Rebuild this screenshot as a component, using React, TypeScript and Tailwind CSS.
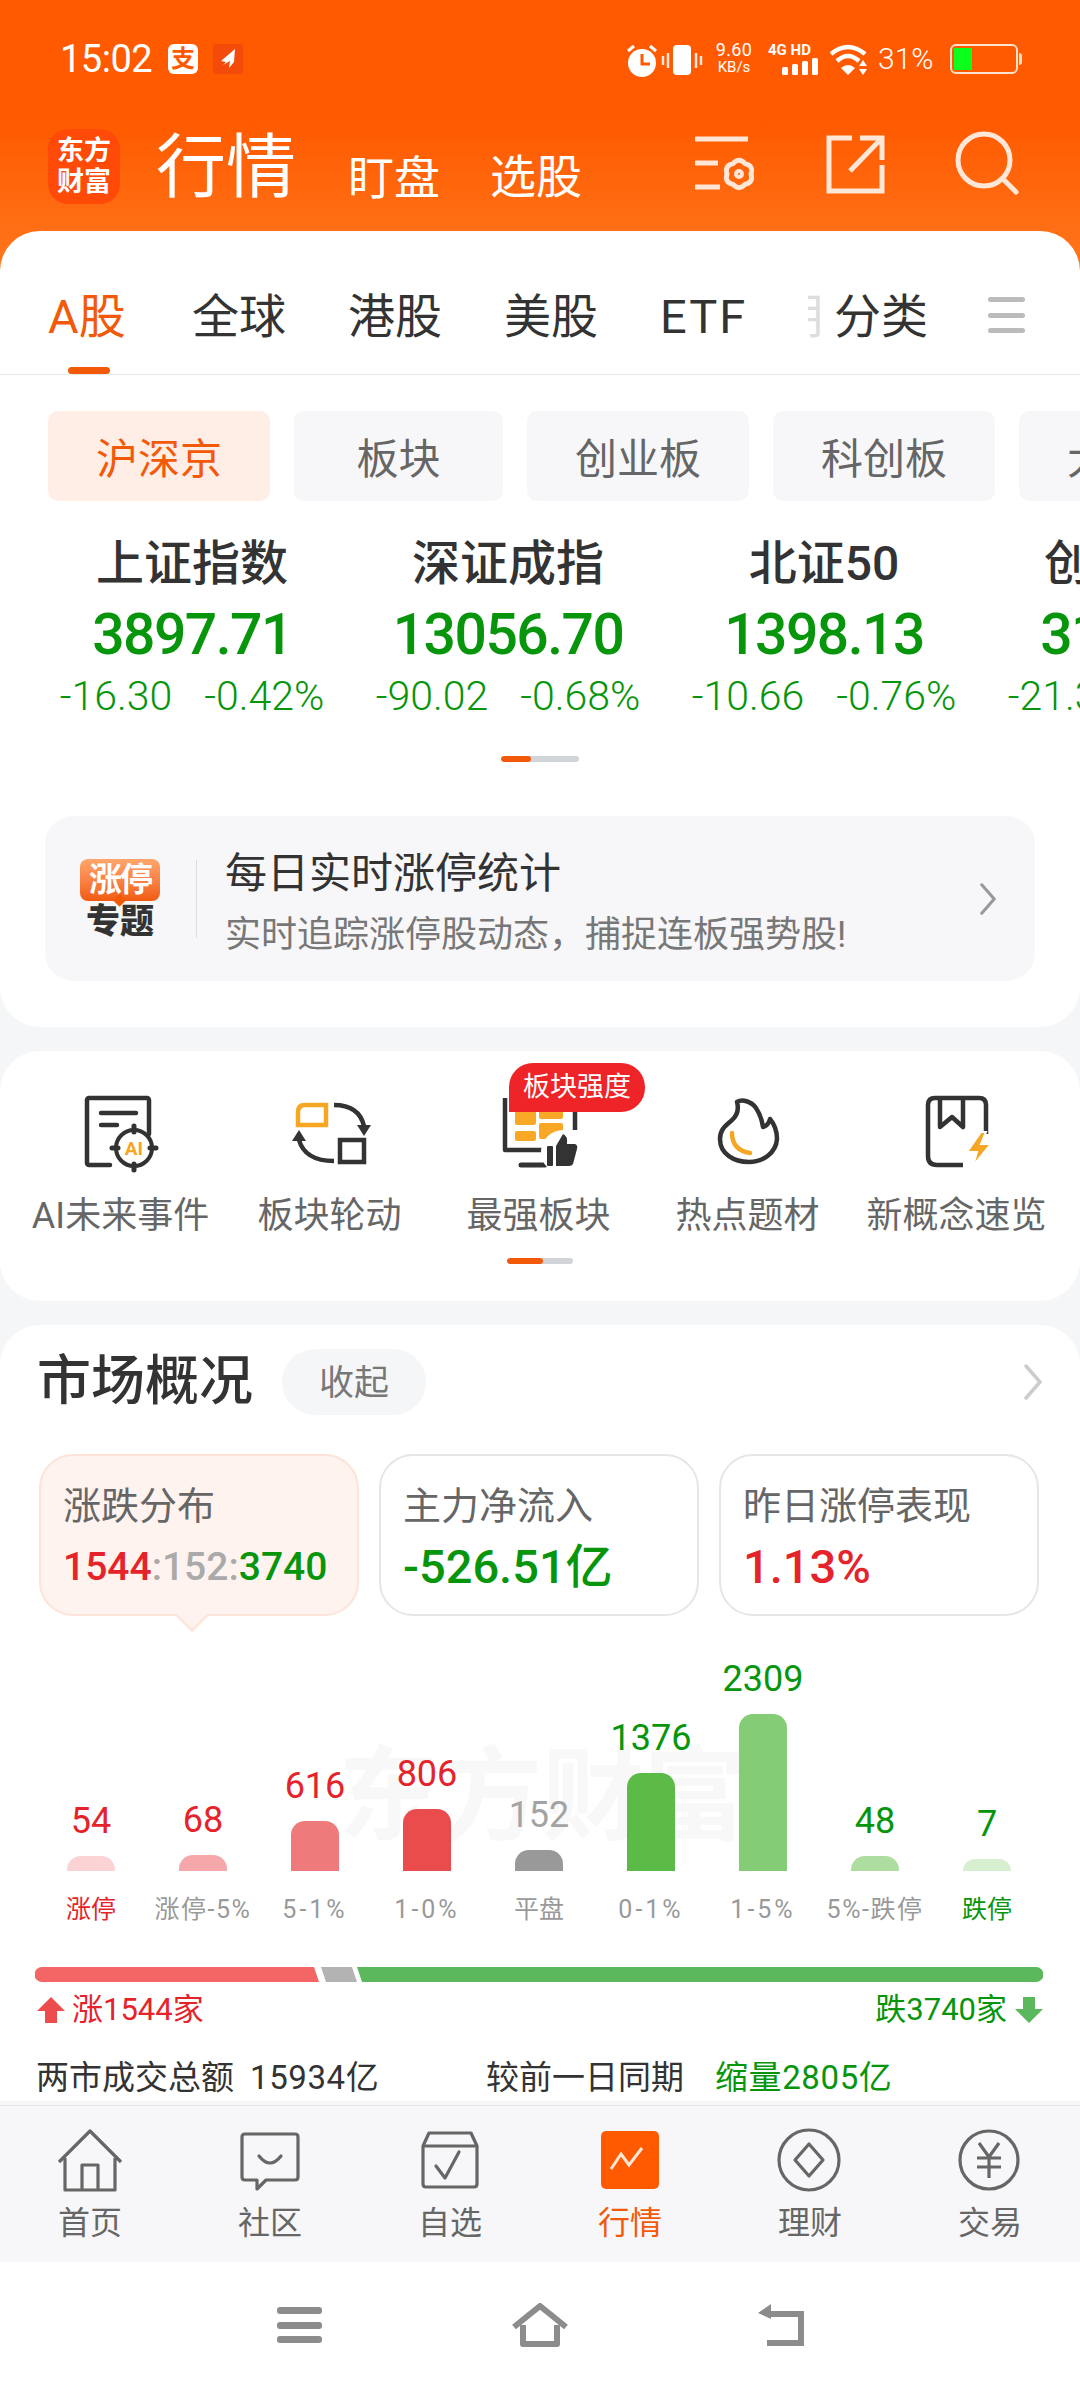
const topTabs = ['全球', '港股', '美股'];

const chips = [
  { label: '沪深京', width: 'w-[222px]', active: true },
  { label: '板块', width: 'w-[209px]', active: false },
  { label: '创业板', width: 'w-[222px]', active: false },
  { label: '科创板', width: 'w-[222px]', active: false },
  { label: '大盘', width: 'w-[180px]', active: false },
];

const indices = [
  { name: '上证指数', price: '3897.71', change: '-16.30', percent: '-0.42%' },
  { name: '深证成指', price: '13056.70', change: '-90.02', percent: '-0.68%' },
  { name: '北证50', price: '1398.13', change: '-10.66', percent: '-0.76%' },
  { name: '创业板指', price: '3150.43', change: '-21.35', percent: '-0.67%' },
];

const bars = [
  { value: '54', label: '涨停', height: 15, bar: 'bg-[#fbd3d4]', text: 'text-[#e5232a]', labelClass: 'text-[#e5232a]' },
  { value: '68', label: '涨停-5%', height: 16, bar: 'bg-[#f6a7a9]', text: 'text-[#e5232a]', labelClass: 'text-[#999999] tracking-[1.5px]' },
  { value: '616', label: '5-1%', height: 50, bar: 'bg-[#ef7a7c]', text: 'text-[#e5232a]', labelClass: 'text-[#999999] tracking-[3px]' },
  { value: '806', label: '1-0%', height: 62, bar: 'bg-[#ea4b4d]', text: 'text-[#e5232a]', labelClass: 'text-[#999999] tracking-[3px]' },
  { value: '152', label: '平盘', height: 21, bar: 'bg-[#999999]', text: 'text-[#a3a3a3]', labelClass: 'text-[#999999]' },
  { value: '1376', label: '0-1%', height: 98, bar: 'bg-[#5bbb46]', text: 'text-[#07950c]', labelClass: 'text-[#999999] tracking-[3px]' },
  { value: '2309', label: '1-5%', height: 157, bar: 'bg-[#85cc76]', text: 'text-[#07950c]', labelClass: 'text-[#999999] tracking-[3px]' },
  { value: '48', label: '5%-跌停', height: 15, bar: 'bg-[#addd9f]', text: 'text-[#07950c]', labelClass: 'text-[#999999] tracking-[1.5px]' },
  { value: '7', label: '跌停', height: 12, bar: 'bg-[#d6efce]', text: 'text-[#07950c]', labelClass: 'text-[#07950c]' },
];

const Chevron = ({ color, className }: { color: string; className: string }) => (
  <svg viewBox="0 0 20 36" className={className} fill="none" stroke={color} strokeWidth="3.5" strokeLinecap="round" strokeLinejoin="round">
    <path d="M3 2 L17 18 L3 34" />
  </svg>
);

const AlarmVibrate = () => (
  <svg width="76" height="34" viewBox="0 0 76 34" className="shrink-0">
    <circle cx="15" cy="19" r="14" fill="#fff" />
    <path d="M15 10v10h8" stroke="#ff5a00" strokeWidth="3" fill="none" />
    <path d="M1 7l6-5M29 7l-6-5" stroke="#fff" strokeWidth="3" />
    <rect x="46" y="1" width="18" height="30" rx="4" fill="#fff" />
    <path d="M41 9v15M69 9v15" stroke="#fff" strokeWidth="2.500" opacity="0.85" />
    <path d="M36 12v9M74 12v9" stroke="#fff" strokeWidth="2.500" opacity="0.85" />
  </svg>
);

const SignalBars = () => (
  <svg width="36" height="17" viewBox="0 0 36 17" className="ml-auto">
    <rect x="0" y="9" width="6" height="8" rx="1.500" fill="#fff" />
    <rect x="10" y="6" width="6" height="11" rx="1.500" fill="#fff" />
    <rect x="20" y="3" width="6" height="14" rx="1.500" fill="#fff" />
    <rect x="30" y="0" width="6" height="17" rx="1.500" fill="#fff" />
  </svg>
);

const WifiIcon = () => (
  <svg width="38" height="32" viewBox="0 0 38 32" className="shrink-0">
    <path d="M1 10Q18 -4 35 10" stroke="#fff" strokeWidth="4.500" fill="none" />
    <path d="M7 17Q18 7 29 17" stroke="#fff" strokeWidth="4.500" fill="none" />
    <path d="M11 24Q18 18 25 24L18 31Z" fill="#fff" />
    <path d="M29 22h8l-4-6zM29 25h8l-4 6z" fill="#fff" />
  </svg>
);

const Battery = () => (
  <div className="flex items-center">
    <div className="w-[68px] h-[30px] rounded-[6px] border-2 border-[#ffe1cc] p-[2px]">
      <div className="w-[18px] h-full bg-[#0cff1c]" />
    </div>
    <div className="w-[3px] h-[12px] ml-[1px] bg-[#ffe1cc] rounded-r-sm" />
  </div>
);

const StatusBar = () => (
  <div className="h-[118px] pt-[41px] pl-[60px] flex items-start text-white">
    <span className="w-[92px] text-[38px] leading-[36px] tracking-[-0.5px]">15:02</span>
    <div className="ml-[16px] w-[30px] h-[30px] mt-[3px] bg-white rounded-[6px] flex items-center justify-center text-[#ff5a00] text-[24px] leading-none font-bold">支</div>
    <div className="ml-[15px] w-[30px] h-[30px] mt-[3px] bg-[#f44a0a] rounded-[3px] flex items-center justify-center">
      <svg width="20" height="22" viewBox="0 0 20 22" fill="#fff">
        <path d="M17 1 L3 13 L8 14 L5 17 L12 13 L11 20 L16 14 Z" />
      </svg>
    </div>
    <div className="ml-[384px] mt-[3px]">
      <AlarmVibrate />
    </div>
    <div className="ml-[11px] w-[40px] flex flex-col items-center">
      <span className="text-[18px] leading-[18px] tracking-[0.3px]">9.60</span>
      <span className="text-[15px] leading-[17px]">KB/s</span>
    </div>
    <div className="ml-[14px] mt-[1px] w-[50px] flex flex-col">
      <span className="text-[15px] leading-[16px] font-bold whitespace-nowrap">4G HD</span>
      <SignalBars />
    </div>
    <div className="ml-[12px] mt-[3px]">
      <WifiIcon />
    </div>
    <span className="ml-[10px] w-[60px] text-[30px] leading-[36px] font-light">31%</span>
    <div className="ml-[12px] mt-[3px]">
      <Battery />
    </div>
  </div>
);

const HeaderIcons = () => (
  <div className="ml-auto mr-[60px] mt-[17px] flex items-start">
    <svg width="64" height="58" viewBox="0 0 64 58" fill="none" stroke="#ffe7d8" strokeWidth="5">
      <path d="M1 4H54M1 28H24M1 52H26" />
      <path d="M57 39Q59.700 30.500 51 28.600Q45 22 39 28.600Q30.300 30.500 33 39Q30.300 47.500 39 49.400Q45 56 51 49.400Q59.700 47.500 57 39Z" strokeLinejoin="round" />
      <circle cx="45" cy="39" r="3" strokeWidth="4" />
    </svg>
    <svg width="60" height="60" viewBox="0 0 60 60" fill="none" stroke="#ffe7d8" strokeWidth="5" className="ml-[68px]">
      <path d="M26 3H3V56H56V30" />
      <path d="M24 36L54 5M34 3H56V25" />
    </svg>
    <svg width="66" height="66" viewBox="0 0 66 66" fill="none" stroke="#ffe7d8" strokeWidth="5" strokeLinecap="round" className="ml-[68px] -mt-[5px]">
      <circle cx="30" cy="30" r="26" />
      <path d="M50 50L62 62" />
    </svg>
  </div>
);

const TitleRow = () => (
  <div className="h-[113px] pl-[48px] flex items-start text-white">
    <div className="w-[72px] h-[75px] mt-[11px] rounded-[20px] bg-[#ff4a08] flex flex-col items-center justify-center text-[27px] leading-[31px] font-bold">
      <span>东方</span>
      <span>财富</span>
    </div>
    <span className="ml-[36px] mt-[5px] text-[70px] leading-[90px]">行情</span>
    <span className="ml-[52px] mt-[28px] text-[46px] leading-[64px]">盯盘</span>
    <span className="ml-[50px] mt-[27px] text-[46px] leading-[64px]">选股</span>
    <HeaderIcons />
  </div>
);

const MarketTabs = () => (
  <div className="h-[144px] pl-[48px] pt-[56px] flex items-start border-b border-[#e8e8e8] text-[47px] leading-[60px] text-[#333333]">
    <div className="w-[80px] flex flex-col text-[#f25a0a] whitespace-nowrap">
      <span>A股</span>
      <span className="w-[42px] h-[7px] mt-[20px] ml-[20px] rounded-full bg-[#f25a0a]" />
    </div>
    <div className="flex gap-[64px] ml-[64px]">
      {topTabs.map((tab) => (
        <span key={tab} className="w-[92px] whitespace-nowrap">{tab}</span>
      ))}
      <span className="w-[86px] tracking-[2px]">ETF</span>
    </div>
    <div className="ml-[62px] w-[14px] overflow-hidden text-[#dddddd]">
      <span className="block -ml-[32px] w-[60px]">期</span>
    </div>
    <span className="ml-[12px] whitespace-nowrap">分类</span>
    <div className="ml-[60px] mt-[10px] w-[37px] h-[36px] flex flex-col justify-between">
      <span className="h-[5px] rounded-full bg-[#bbbbbb]" />
      <span className="h-[5px] rounded-full bg-[#bbbbbb]" />
      <span className="h-[5px] rounded-full bg-[#bbbbbb]" />
    </div>
  </div>
);

const ChipRow = () => (
  <div className="mt-[36px] pl-[48px] flex gap-[24px] overflow-hidden">
    {chips.map((chip) => (
      <div
        key={chip.label}
        className={
          chip.active
            ? `${chip.width} shrink-0 h-[90px] pt-[7px] rounded-[10px] bg-[#ffeee6] text-[#f25a0a] text-[42px] flex items-center justify-center`
            : `${chip.width} shrink-0 h-[90px] pt-[7px] rounded-[10px] bg-[#f7f7f9] text-[#666666] text-[42px] flex items-center justify-center`
        }
      >
        {chip.label}
      </div>
    ))}
  </div>
);

const IndexRow = () => (
  <div className="mt-[33px] pl-[34px] flex overflow-hidden">
    {indices.map((item) => (
      <div key={item.name} className="w-[316px] shrink-0 flex flex-col items-center">
        <span className="h-[60px] text-[48px] leading-[60px] font-medium text-[#333333]">{item.name}</span>
        <span className="h-[80px] text-[57px] leading-[82px] tracking-[-1.5px] font-medium text-[#07950c]">{item.price}</span>
        <div className="h-[44px] flex gap-[32px] text-[41px] leading-[44px] font-light text-[#07950c] whitespace-nowrap">
          <span>{item.change}</span>
          <span>{item.percent}</span>
        </div>
      </div>
    ))}
  </div>
);

const Pager = ({ track, fill, className }: { track: string; fill: string; className: string }) => (
  <div className={`${track} h-[6px] rounded-full bg-[#d1d4d9] overflow-hidden ${className}`}>
    <div className={`${fill} h-full rounded-full bg-[#f25a0a]`} />
  </div>
);

const LimitBanner = () => (
  <div className="mx-[45px] mt-[54px] h-[165px] rounded-[28px] bg-[#f7f7f9] flex items-center">
    <div className="ml-[35px] w-[80px] flex flex-col items-center">
      <div className="relative w-[80px] h-[42px] rounded-[8px] bg-gradient-to-b from-[#ffa66b] to-[#f25a0a] text-white text-[33px] leading-[42px] font-bold text-center tracking-[-2px]">
        涨停
        <span className="absolute left-[35px] -bottom-[4px] w-[9px] h-[9px] rotate-45 bg-[#f25a0a]" />
      </div>
      <span className="mt-[3px] text-[34px] leading-[34px] font-black text-[#333333]">专题</span>
    </div>
    <div className="ml-[36px] w-[1px] h-[78px] bg-[#dddddd]" />
    <div className="ml-[28px] pt-[9px] flex flex-col">
      <span className="text-[42px] leading-[56px] text-[#333333]">每日实时涨停统计</span>
      <span className="mt-[8px] text-[36px] leading-[50px] text-[#777777]">实时追踪涨停股动态，捕捉连板强势股!</span>
    </div>
    <Chevron color="#999999" className="ml-auto mr-[38px] w-[18px] h-[32px]" />
  </div>
);

const AiEventIcon = () => (
  <svg width="84" height="84" viewBox="0 0 84 84" fill="none" stroke="#333333" strokeWidth="4.500" strokeLinecap="round">
    <path d="M70 44V10a2 2 0 0 0-2-2H10a2 2 0 0 0-2 2V73a2 2 0 0 0 2 2H31" />
    <path d="M22 23H57M22 35H38" />
    <circle cx="55" cy="58" r="18" strokeWidth="4" />
    <path d="M55 36V42M55 74V80M33 58H39M71 58H77" strokeWidth="5" />
    <text x="55" y="65" textAnchor="middle" fontSize="19" fontWeight="700" fill="#f5a623" stroke="none" fontFamily="Roboto, sans-serif">AI</text>
  </svg>
);

const RotationIcon = () => (
  <svg width="84" height="84" viewBox="0 0 84 84" fill="none" stroke="#333333" strokeWidth="4.500">
    <path d="M17 15H38V35H10V22Q10 15 17 15Z" stroke="#f5a623" fill="#fff" />
    <path d="M52 50H76V72H52Z" />
    <path d="M46 15Q71 15 76 36" />
    <path d="M69 35H83L76 46Z" fill="#333333" stroke="none" />
    <path d="M46 71Q17 71 11 50" />
    <path d="M4 51H18L11 40Z" fill="#333333" stroke="none" />
  </svg>
);

const StrongestIcon = () => (
  <svg width="84" height="84" viewBox="0 0 84 84" fill="none">
    <path d="M8 8V60H64M78 8V40" stroke="#333333" strokeWidth="4.500" strokeLinejoin="round" />
    <path d="M24 75H48" stroke="#333333" strokeWidth="5" strokeLinecap="round" />
    <rect x="18" y="20" width="21" height="15" rx="2" fill="#f9a825" />
    <rect x="42" y="20" width="24" height="9" rx="2" fill="#f9a825" />
    <rect x="42" y="33" width="24" height="16" rx="2" fill="#f9a825" />
    <rect x="18" y="41" width="21" height="10" rx="2" fill="#f9a825" />
    <circle cx="66" cy="62" r="22" fill="#fff" />
    <rect x="50" y="56" width="6" height="20" rx="1" fill="#333333" />
    <path d="M59 76V56L66 44Q71 46 70 54H78Q81 55 80 59L76 74Q75 76 72 76Z" fill="#333333" />
  </svg>
);

const FlameIcon = () => (
  <svg width="84" height="84" viewBox="0 0 84 84" fill="none" stroke="#333333" strokeWidth="4.500" strokeLinejoin="round">
    <path d="M31 12C36 9 45 11 50 18C54 24 56 30 57 37C61 36 63 33 64 29C69 35 71 42 71 49C70 63 57 72 43 72C28 72 14 64 14 49C14 40 19 36 25 31C31 26 33 19 31 12Z" />
    <path d="M26 43C26 54 32 61 44 63" stroke="#f5a623" strokeLinecap="round" />
  </svg>
);

const ConceptIcon = () => (
  <svg width="84" height="84" viewBox="0 0 84 84" fill="none" stroke="#333333" strokeWidth="4.500">
    <path d="M48 75H22Q13 75 13 66V15Q13 8 20 8H64Q71 8 71 15V44" strokeLinejoin="round" />
    <path d="M25 8V37L37 27L48 37V8" strokeLinejoin="round" />
    <path d="M66 42L52 62H62L58 76L76 54H66L71 42Z" fill="#f5a623" stroke="#fff" strokeWidth="2" />
  </svg>
);

const quickLinks = [
  { label: 'AI未来事件', icon: <AiEventIcon /> },
  { label: '板块轮动', icon: <RotationIcon /> },
  { label: '最强板块', icon: <StrongestIcon /> },
  { label: '热点题材', icon: <FlameIcon /> },
  { label: '新概念速览', icon: <ConceptIcon /> },
];

const QuickLinks = () => (
  <div className="mt-[24px] h-[250px] rounded-[40px] bg-white relative">
    <div className="pl-[16px] pt-[39px] flex">
      {quickLinks.map((link) => (
        <div key={link.label} className="w-[209px] shrink-0 flex flex-col items-center">
          {link.icon}
          <span className="mt-[15px] text-[36px] leading-[54px] text-[#666666] whitespace-nowrap">{link.label}</span>
        </div>
      ))}
    </div>
    <Pager track="w-[66px]" fill="w-[36px]" className="mx-auto mt-[15px]" />
    <div className="absolute left-[509px] top-[12px] w-[136px] h-[49px] rounded-t-[24px] rounded-br-[24px] bg-[#ee2428] text-white text-[27px] leading-[49px] text-center">
      板块强度
    </div>
  </div>
);

const GaugeBar = () => (
  <svg width="1008" height="15" viewBox="0 0 1008 15" className="ml-[36px] block">
    <path d="M7 0H279L284 15H7A7.500 7.500 0 0 1 7 0Z" fill="#f46666" />
    <path d="M286 0H317L322 15H291Z" fill="#b3b3b3" />
    <path d="M322 0H1001A7.500 7.500 0 0 1 1001 15H327Z" fill="#5cb85c" />
  </svg>
);

const MarketOverview = () => (
  <div className="mt-[24px] rounded-t-[40px] bg-white relative">
    <div className="h-[129px] pl-[37px] pr-[37px] pt-[24px] flex items-start">
      <span className="text-[54px] leading-[66px] font-medium text-[#333333]">市场概况</span>
      <span className="ml-[29px] w-[144px] h-[66px] pt-[2px] rounded-full bg-[#f5f6f8] text-[35px] leading-[66px] text-center text-[#777777]">收起</span>
      <Chevron color="#cccccc" className="ml-auto mt-[15px] w-[20px] h-[36px]" />
    </div>
    <div className="pl-[39px] flex gap-[20px]">
      <div className="relative w-[320px] h-[162px] pl-[22px] rounded-[34px] bg-[#fff3ef] border-2 border-[#fde3d8]">
        <div className="mt-[25px] text-[38px] leading-[50px] text-[#666666]">涨跌分布</div>
        <div className="mt-[11px] text-[39px] leading-[50px] font-medium text-[#e5232a]">
          1544<span className="text-[#aaaaaa]">:152:</span><span className="text-[#07950c]">3740</span>
        </div>
        <span className="absolute left-[139px] -bottom-[13px] w-[24px] h-[24px] rotate-45 bg-[#fff3ef] border-r-2 border-b-2 border-[#fde3d8]" />
      </div>
      <div className="w-[320px] h-[162px] pl-[22px] rounded-[34px] border-2 border-[#e6e6e6]">
        <div className="mt-[25px] text-[38px] leading-[50px] text-[#666666]">主力净流入</div>
        <div className="mt-[11px] text-[47px] leading-[50px] font-medium text-[#07950c]">-526.51亿</div>
      </div>
      <div className="w-[320px] h-[162px] pl-[22px] rounded-[34px] border-2 border-[#e6e6e6]">
        <div className="mt-[25px] text-[38px] leading-[50px] text-[#666666]">昨日涨停表现</div>
        <div className="mt-[11px] text-[47px] leading-[50px] font-medium text-[#e5232a]">1.13%</div>
      </div>
    </div>
    <div className="relative h-[255px] pl-[35px] flex items-end">
      <span className="absolute left-[338px] top-[126px] text-[102px] leading-[110px] font-bold text-[#f8f8f8] whitespace-nowrap">东方财富</span>
      {bars.map((bar) => (
        <div key={bar.label} className="relative w-[112px] flex flex-col items-center">
          <span className={`h-[44px] mb-[13px] text-[36px] leading-[44px] ${bar.text}`}>{bar.value}</span>
          <div className={`w-[48px] rounded-t-[14px] ${bar.bar}`} style={{ height: bar.height }} />
        </div>
      ))}
    </div>
    <div className="pl-[35px] flex mt-[20px]">
      {bars.map((bar) => (
        <span key={bar.label} className={`w-[112px] h-[38px] text-[25px] leading-[38px] text-center whitespace-nowrap ${bar.labelClass}`}>
          {bar.label}
        </span>
      ))}
    </div>
    <div className="mt-[38px] -ml-[1px]">
      <GaugeBar />
    </div>
    <div className="mt-[8px] h-[40px] px-[37px] flex items-center text-[31px] leading-[40px]">
      <svg width="28" height="26" viewBox="0 0 28 26" fill="#ee4c4c">
        <path d="M14 0L28 14H20V26H8V14H0Z" />
      </svg>
      <span className="ml-[7px] text-[#e5232a]">涨1544家</span>
      <span className="ml-auto text-[#07950c]">跌3740家</span>
      <svg width="28" height="26" viewBox="0 0 28 26" fill="#5cb85c" className="ml-[8px]">
        <path d="M14 26L0 12H8V0H20V12H28Z" />
      </svg>
    </div>
    <div className="mt-[25px] pl-[36px] flex text-[33px] leading-[46px] text-[#333333] whitespace-nowrap">
      <span className="w-[214px]">两市成交总额</span>
      <span className="w-[236px] tracking-[0.6px]">15934亿</span>
      <span className="w-[229px]">较前一日同期</span>
      <span className="text-[#07950c] tracking-[0.6px]">缩量2805亿</span>
    </div>
  </div>
);

const HomeIcon = () => (
  <svg width="70" height="66" viewBox="0 0 70 66" fill="none" stroke="#666666" strokeWidth="3.200" strokeLinejoin="round">
    <path d="M4 34L35 3L66 34M10 30V62H60V30M27 62V37H43V62" />
  </svg>
);

const CommunityIcon = () => (
  <svg width="70" height="66" viewBox="0 0 70 66" fill="none" stroke="#666666" strokeWidth="3.200" strokeLinejoin="round">
    <path d="M10 6Q7 6 7 9V49Q7 52 10 52H22V61L31 52H60Q63 52 63 49V9Q63 6 60 6Z" />
    <path d="M24 28Q35 42 46 28" strokeLinecap="round" />
  </svg>
);

const WatchlistIcon = () => (
  <svg width="70" height="66" viewBox="0 0 70 66" fill="none" stroke="#666666" strokeWidth="3.200" strokeLinejoin="round">
    <path d="M8 18V56Q8 59 11 59H59Q62 59 62 56V18Z" />
    <path d="M8 18L14 5H56L62 18" />
    <path d="M21 38L30 50L44 24" strokeLinecap="round" />
  </svg>
);

const MarketIcon = () => (
  <svg width="70" height="66" viewBox="0 0 70 66" fill="none">
    <rect x="6" y="3" width="58" height="58" rx="5" fill="#ff5a00" />
    <path d="M16 41L26 26L34 37L47 20" stroke="#ffe7d8" strokeWidth="3" />
  </svg>
);

const WealthIcon = () => (
  <svg width="70" height="66" viewBox="0 0 70 66" fill="none" stroke="#666666" strokeWidth="3.200" strokeLinejoin="round">
    <circle cx="34" cy="32" r="30" />
    <path d="M34 16L48 32L34 48L20 32Z" />
  </svg>
);

const TradeIcon = () => (
  <svg width="70" height="66" viewBox="0 0 70 66" fill="none" stroke="#666666" strokeWidth="3.200">
    <circle cx="34" cy="32" r="29" />
    <path d="M24 15L34 29L44 15M22 30H46M22 39H46M34 29V50" />
  </svg>
);

const bottomTabs = [
  { label: '首页', icon: <HomeIcon />, active: false },
  { label: '社区', icon: <CommunityIcon />, active: false },
  { label: '自选', icon: <WatchlistIcon />, active: false },
  { label: '行情', icon: <MarketIcon />, active: true },
  { label: '理财', icon: <WealthIcon />, active: false },
  { label: '交易', icon: <TradeIcon />, active: false },
];

const BottomTabs = () => (
  <div className="h-[157px] shrink-0 border-t border-[#e5e5ea] bg-[#f7f7f9] flex">
    {bottomTabs.map((tab) => (
      <div key={tab.label} className="w-[180px] pt-[22px] flex flex-col items-center">
        {tab.icon}
        <span className={tab.active ? 'mt-[7px] text-[32px] leading-[44px] text-[#f25a0a]' : 'mt-[7px] text-[32px] leading-[44px] text-[#666666]'}>
          {tab.label}
        </span>
      </div>
    ))}
  </div>
);

const SystemNav = () => (
  <div className="h-[126px] shrink-0 bg-white flex items-center pl-[277px]">
    <svg width="45" height="36" viewBox="0 0 45 36" fill="#8c8c8c">
      <rect width="45" height="7" rx="3" />
      <rect y="15" width="45" height="7" rx="3" />
      <rect y="29" width="45" height="7" rx="3" />
    </svg>
    <svg width="58" height="44" viewBox="0 0 58 44" fill="none" stroke="#8c8c8c" strokeWidth="6" strokeLinejoin="round" className="ml-[189px]">
      <path d="M3 24L29 3L55 24M12 22V41H46V22" />
    </svg>
    <svg width="50" height="44" viewBox="0 0 50 44" fill="none" stroke="#8c8c8c" strokeWidth="6" className="ml-[188px]">
      <path d="M10 11H44V40H10" />
      <path d="M14 1L1 10L14 16Z" fill="#8c8c8c" stroke="none" />
    </svg>
  </div>
);

export default function App() {
  return (
    <div className="w-[1080px] h-[2388px] flex flex-col overflow-hidden bg-[#f5f6f8] [font-family:Roboto,'Noto_Sans_CJK_SC',sans-serif]">
      <div className="flex-1 overflow-hidden">
        <div className="bg-[linear-gradient(#ff5a00_0px,#ff5a00_120px,#ff7a20_290px)] bg-[length:100%_290px] bg-no-repeat">
          <StatusBar />
          <TitleRow />
          <div className="h-[796px] rounded-[40px] bg-white">
            <MarketTabs />
            <ChipRow />
            <IndexRow />
            <Pager track="w-[78px]" fill="w-[30px]" className="ml-[501px] mt-[38px]" />
            <LimitBanner />
          </div>
        </div>
        <QuickLinks />
        <MarketOverview />
      </div>
      <BottomTabs />
      <SystemNav />
    </div>
  );
}
